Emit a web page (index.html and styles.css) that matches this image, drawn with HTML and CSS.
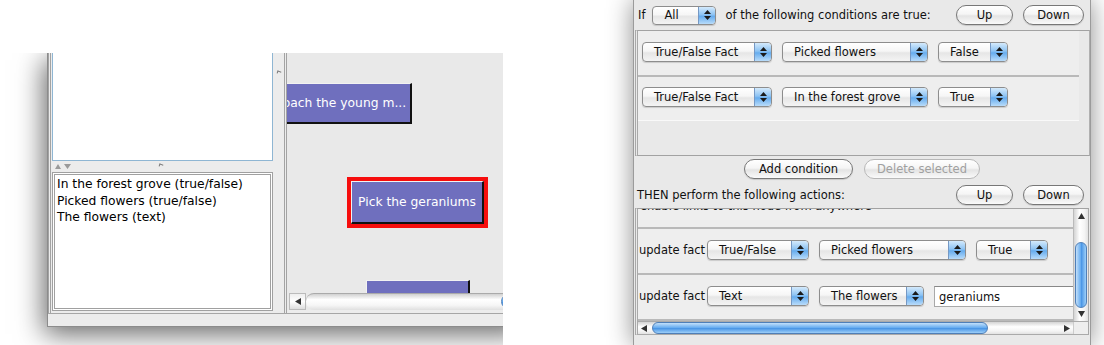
FILE: index.html
```html
<!DOCTYPE html>
<html lang="en">
<head>
    <meta charset="UTF-8">
    <title>Story editor</title>
    <link rel="stylesheet" href="styles.css">
</head>
<body>
    <div class="left-clip">
        <div class="lwin">
            <div class="lw-main">
                <div class="lpane">
                    <div class="top-row">
                        <div class="list-top"></div>
                        <div class="gutter"><span class="grip grip-side"></span></div>
                    </div>
                    <div class="divider">
                        <svg class="tris" width="16" height="6" viewBox="0 0 16 6"><path d="M3 0L6 5H0zM9 0h7l-3.5 5z" fill="#9a9a9a"/></svg>
                        <span class="grip grip-mid"></span>
                    </div>
                    <div class="list-bottom">
                        <div>In the forest grove (true/false)</div>
                        <div>Picked flowers (true/false)</div>
                        <div>The flowers (text)</div>
                    </div>
                </div>
                <div class="canvas">
                    <div class="nodes">
                        <div class="node node-approach">Approach the young m...</div>
                        <div class="selected">
                            <div class="node">Pick the geraniums</div>
                        </div>
                        <div class="node node-next"></div>
                    </div>
                    <div class="hscroll">
                        <div class="sb-arrow"><svg width="6" height="7" viewBox="0 0 6 7"><path d="M0 3.5L6 0v7z" fill="#333"/></svg></div>
                        <div class="sb-track"><div class="sb-thumb"></div></div>
                    </div>
                </div>
            </div>
            <div class="lw-foot"></div>
        </div>
    </div>

    <div class="rwin">
        <div class="bar top-bar">
            <span>If</span>
            <div class="popup pop-all"><span>All</span><span class="arrows"><svg width="7" height="10" viewBox="0 0 7 10"><path d="M3.5 0L7 4H0zM0 6h7L3.5 10z" fill="#1a1a1a"/></svg></span></div>
            <span class="bar-text">of the following conditions are true:</span>
            <div class="btn btn-up">Up</div>
            <div class="btn btn-down">Down</div>
        </div>

        <div class="cond-box">
            <div class="cond-list">
                <div class="row">
                    <div class="popup pop-type"><span>True/False Fact</span><span class="arrows"><svg width="7" height="10" viewBox="0 0 7 10"><path d="M3.5 0L7 4H0zM0 6h7L3.5 10z" fill="#1a1a1a"/></svg></span></div>
                    <div class="popup pop-fact"><span>Picked flowers</span><span class="arrows"><svg width="7" height="10" viewBox="0 0 7 10"><path d="M3.5 0L7 4H0zM0 6h7L3.5 10z" fill="#1a1a1a"/></svg></span></div>
                    <div class="popup pop-bool"><span>False</span><span class="arrows"><svg width="7" height="10" viewBox="0 0 7 10"><path d="M3.5 0L7 4H0zM0 6h7L3.5 10z" fill="#1a1a1a"/></svg></span></div>
                </div>
                <div class="row row-last">
                    <div class="popup pop-type"><span>True/False Fact</span><span class="arrows"><svg width="7" height="10" viewBox="0 0 7 10"><path d="M3.5 0L7 4H0zM0 6h7L3.5 10z" fill="#1a1a1a"/></svg></span></div>
                    <div class="popup pop-fact"><span>In the forest grove</span><span class="arrows"><svg width="7" height="10" viewBox="0 0 7 10"><path d="M3.5 0L7 4H0zM0 6h7L3.5 10z" fill="#1a1a1a"/></svg></span></div>
                    <div class="popup pop-bool"><span>True</span><span class="arrows"><svg width="7" height="10" viewBox="0 0 7 10"><path d="M3.5 0L7 4H0zM0 6h7L3.5 10z" fill="#1a1a1a"/></svg></span></div>
                </div>
            </div>
        </div>

        <div class="btn-row">
            <div class="btn btn-add">Add condition</div>
            <div class="btn btn-delete disabled">Delete selected</div>
        </div>

        <div class="bar then-bar">
            <span>THEN perform the following actions:</span>
            <div class="btn btn-up">Up</div>
            <div class="btn btn-down">Down</div>
        </div>

        <div class="act-box">
            <div class="act-main">
                <div class="act-view">
                    <div class="row row-partial">enable links to this node from anywhere</div>
                    <div class="row act-row">
                        <span class="act-label">update fact</span>
                        <div class="popup pop-atype"><span>True/False</span><span class="arrows"><svg width="7" height="10" viewBox="0 0 7 10"><path d="M3.5 0L7 4H0zM0 6h7L3.5 10z" fill="#1a1a1a"/></svg></span></div>
                        <div class="popup pop-afact"><span>Picked flowers</span><span class="arrows"><svg width="7" height="10" viewBox="0 0 7 10"><path d="M3.5 0L7 4H0zM0 6h7L3.5 10z" fill="#1a1a1a"/></svg></span></div>
                        <div class="popup pop-abool"><span>True</span><span class="arrows"><svg width="7" height="10" viewBox="0 0 7 10"><path d="M3.5 0L7 4H0zM0 6h7L3.5 10z" fill="#1a1a1a"/></svg></span></div>
                    </div>
                    <div class="row act-row">
                        <span class="act-label">update fact</span>
                        <div class="popup pop-atype"><span>Text</span><span class="arrows"><svg width="7" height="10" viewBox="0 0 7 10"><path d="M3.5 0L7 4H0zM0 6h7L3.5 10z" fill="#1a1a1a"/></svg></span></div>
                        <div class="popup pop-name"><span>The flowers</span><span class="arrows"><svg width="7" height="10" viewBox="0 0 7 10"><path d="M3.5 0L7 4H0zM0 6h7L3.5 10z" fill="#1a1a1a"/></svg></span></div>
                        <div class="textfield">geraniums</div>
                    </div>
                </div>
                <div class="vscroll">
                    <div class="vs-arrow"><svg width="7" height="6" viewBox="0 0 7 6"><path d="M3.5 0L7 6H0z" fill="#333"/></svg></div>
                    <div class="vs-track"><div class="vs-thumb"></div></div>
                    <div class="vs-arrow"><svg width="7" height="6" viewBox="0 0 7 6"><path d="M0 0h7L3.5 6z" fill="#333"/></svg></div>
                </div>
            </div>
            <div class="hscroll-r">
                <div class="hs-arrow"><svg width="6" height="7" viewBox="0 0 6 7"><path d="M0 3.5L6 0v7z" fill="#333"/></svg></div>
                <div class="hs-track"><div class="hs-thumb"></div></div>
                <div class="hs-arrow"><svg width="6" height="7" viewBox="0 0 6 7"><path d="M6 3.5L0 0v7z" fill="#333"/></svg></div>
                <div class="hs-corner"></div>
            </div>
        </div>
    </div>
</body>
</html>
```

FILE: styles.css
```css
* {
    box-sizing: border-box;
}

body {
    margin: 0;
    width: 1104px;
    height: 345px;
    overflow: hidden;
    background: #fff;
    font-family: "DejaVu Sans", sans-serif;
    font-size: 11.5px;
    color: #111;
    display: flex;
}

/* left window (cropped) */
.left-clip {
    flex: none;
    width: 503px;
    height: 292px;
    margin-top: 53px;
    padding-left: 47px;
    overflow: hidden;
}

.lwin {
    width: 480px;
    height: 274px;
    background: #ececec;
    border-left: 1px solid #8c8c8c;
    border-bottom: 1px solid #8c8c8c;
    box-shadow: -3px 7px 26px rgba(0, 0, 0, 0.6);
    display: flex;
    flex-direction: column;
}

.lw-main {
    height: 260px;
    display: flex;
}

.lpane {
    flex: none;
    width: 236px;
    padding-left: 1px;
    border-left: 3px double #a3a3a3;
    display: flex;
    flex-direction: column;
}

.top-row {
    height: 108px;
    display: flex;
}

.list-top {
    width: 221px;
    background: #fff;
    border: 1px solid #8fb6d3;
    border-top: none;
}

.gutter {
    flex: 1;
    position: relative;
}

.grip {
    position: absolute;
    width: 4px;
    height: 3px;
    border-top: 1px solid #777;
    border-left: 1px solid #777;
    transform: rotate(20deg);
}

.grip-side {
    left: 4px;
    top: 18px;
}

.divider {
    height: 11px;
    position: relative;
    display: flex;
    align-items: center;
    padding-left: 3px;
}

.grip-mid {
    left: 107px;
    top: 3px;
}

.list-bottom {
    width: 221px;
    height: 139px;
    background: #fff;
    border: 3px double #a0a0a0;
    padding: 1px 0 0 2px;
    font-size: 12.3px;
    line-height: 16.5px;
    color: #000;
}

.canvas {
    flex: 1;
    min-width: 0;
    border-left: 3px double #a3a3a3;
    display: flex;
    flex-direction: column;
}

.nodes {
    height: 240px;
    position: relative;
    overflow: hidden;
    background: #e9e9e9;
}

.node {
    position: absolute;
    background: #6f6fbe;
    color: #fff;
    font-size: 12.3px;
    display: flex;
    align-items: center;
    justify-content: center;
    white-space: nowrap;
    overflow: hidden;
    border-top: 1px solid #f2f2f2;
    border-left: 1px solid #f2f2f2;
    border-right: 2px solid #111;
    border-bottom: 2px solid #111;
}

.node-approach {
    left: -38px;
    top: 30px;
    width: 163px;
    height: 41px;
}

.selected {
    position: absolute;
    left: 60px;
    top: 124px;
    width: 141px;
    height: 51px;
    border: 4px solid #f60d0d;
}

.selected .node {
    position: static;
    width: 100%;
    height: 100%;
}

.node-next {
    left: 79px;
    top: 227px;
    width: 104px;
    height: 30px;
}

.hscroll {
    height: 17px;
    display: flex;
    background: #e9e9e9;
}

.sb-arrow {
    flex: none;
    width: 17px;
    margin-left: 2px;
    display: flex;
    align-items: center;
    justify-content: center;
    background: linear-gradient(#eee, #fff 50%, #ddd);
    border: 1px solid #bbb;
}

.sb-track {
    flex: 1;
    min-width: 0;
    background: linear-gradient(#d0d0d0, #fff 35%, #f6f6f6 70%, #e0e0e0);
    border-top: 1px solid #aaa;
    border-radius: 8px 0 0 8px;
    padding-left: 195px;
}

.sb-thumb {
    width: 40px;
    height: 15px;
    border-radius: 8px;
    border: 1px solid #4f7fb8;
    background: linear-gradient(#c3e0fa, #6aaef0 45%, #4c97e6 55%, #9ccff9);
}

.lw-foot {
    flex: 1;
    border-top: 1px solid #a6a6a6;
}

/* right window */
.rwin {
    flex: none;
    width: 458px;
    height: 345px;
    margin-left: 130px;
    background: #e9e9e9;
    border-left: 1px solid #9b9b9b;
    border-right: 1px solid #9b9b9b;
    box-shadow: 0 0 24px rgba(0, 0, 0, 0.45);
    display: flex;
    flex-direction: column;
}

.bar {
    display: flex;
    align-items: center;
    white-space: nowrap;
}

.top-bar {
    height: 30px;
    padding: 0 6px 0 4px;
}

.bar-text {
    margin-left: 9px;
}

.popup {
    height: 20px;
    display: flex;
    align-items: center;
    padding-left: 11px;
    border: 1px solid #8d8d8d;
    border-radius: 4px;
    background: linear-gradient(#fff, #f6f6f6 45%, #e6e6e6 55%, #f4f4f4);
    box-shadow: 0 1px 1px rgba(0, 0, 0, 0.15);
    white-space: nowrap;
    overflow: hidden;
    flex: none;
}

.popup .arrows {
    margin-left: auto;
    width: 17px;
    height: 100%;
    display: flex;
    align-items: center;
    justify-content: center;
    border-left: 1px solid #7598c4;
    border-radius: 0 3px 3px 0;
    background: linear-gradient(#d4eafc, #8dc3f3 45%, #66acee 55%, #b9dcfa);
}

.pop-all {
    width: 64px;
    margin-left: 7px;
    height: 19px;
}

.pop-type { width: 130px; }
.pop-fact { width: 146px; }
.pop-bool { width: 70px; }
.pop-atype { width: 102px; }
.pop-afact { width: 147px; }
.pop-abool { width: 72px; }
.pop-name { width: 105px; }

.btn {
    height: 20px;
    display: flex;
    align-items: center;
    justify-content: center;
    border: 1px solid #777;
    border-radius: 10px;
    background: linear-gradient(#fff, #f5f5f5 45%, #e4e4e4 55%, #fafafa);
    box-shadow: 0 1px 1px rgba(0, 0, 0, 0.15);
    flex: none;
}

.btn-up {
    width: 57px;
    margin-left: auto;
}

.btn-down {
    width: 61px;
    margin-left: 10px;
}

.btn-add {
    width: 109px;
}

.btn-delete {
    width: 116px;
}

.btn.disabled {
    color: #a0a0a0;
    border-color: #b8b8b8;
    box-shadow: none;
}

.cond-box {
    height: 126px;
    margin-left: 1px;
    border-top: 1px solid #a2a2a2;
    border-left: 3px double #a8a8a8;
    border-right: 1px solid #b0b0b0;
    border-bottom: 1px solid #a2a2a2;
}

.cond-list {
    margin-right: 10px;
}

.row {
    display: flex;
    align-items: flex-start;
    gap: 10px;
    height: 46px;
    padding: 11px 0 0 4px;
    background: #eeeeee;
    border-bottom: 2px solid #b9b9b9;
}

.cond-list .row-last {
    height: 44px;
    padding-top: 10px;
    border-bottom: 1px solid #f9f9f9;
}

.btn-row {
    height: 26px;
    padding-top: 3px;
    display: flex;
    justify-content: center;
    align-items: flex-start;
    gap: 11px;
}

.then-bar {
    height: 26px;
    padding: 0 6px 0 3px;
}

.act-box {
    height: 127px;
    margin: 0 1px;
    border-top: 1px solid #a2a2a2;
    border-left: 3px double #a8a8a8;
    border-right: 1px solid #a8a8a8;
    border-bottom: 1px solid #aaa;
    display: flex;
    flex-direction: column;
}

.act-main {
    height: 112px;
    display: flex;
}

.act-view {
    flex: 1;
    overflow: hidden;
}

.row-partial {
    margin-top: -24px;
    align-items: center;
    padding: 0 0 0 2px;
    height: 44px;
    white-space: nowrap;
}

.act-row {
    padding-left: 1px;
    gap: 10px;
}

.act-label {
    width: 58px;
    margin-top: 3px;
    white-space: nowrap;
}

.textfield {
    width: 160px;
    height: 21px;
    padding: 3px 0 0 4px;
    background: #fff;
    border: 1px solid #a9a9a9;
    border-top-color: #888;
    flex: none;
}

.vscroll {
    width: 15px;
    display: flex;
    flex-direction: column;
    border-left: 1px solid #bbb;
    background: linear-gradient(90deg, #d4d4d4, #fff 40%, #f4f4f4 75%, #e2e2e2);
}

.vs-arrow {
    height: 14px;
    display: flex;
    align-items: center;
    justify-content: center;
}

.vs-track {
    flex: 1;
    padding-top: 19px;
}

.vs-thumb {
    height: 66px;
    margin: 0 1px;
    border-radius: 7px;
    border: 1px solid #4f7fb8;
    background: linear-gradient(90deg, #c3e0fa, #6aaef0 45%, #4c97e6 55%, #9ccff9);
}

.hscroll-r {
    flex: 1;
    display: flex;
    border-top: 1px solid #aaa;
    background: linear-gradient(#d4d4d4, #fff 40%, #f4f4f4 75%, #e2e2e2);
}

.hs-arrow {
    width: 12px;
    display: flex;
    align-items: center;
    justify-content: center;
}

.hs-track {
    flex: 1;
    padding-left: 2px;
}

.hs-thumb {
    width: 336px;
    height: 100%;
    border-radius: 7px;
    border: 1px solid #4f7fb8;
    background: linear-gradient(#c3e0fa, #6aaef0 45%, #4c97e6 55%, #9ccff9);
}

.hs-corner {
    width: 15px;
    background: #eee;
    border-left: 1px solid #ccc;
}
```
